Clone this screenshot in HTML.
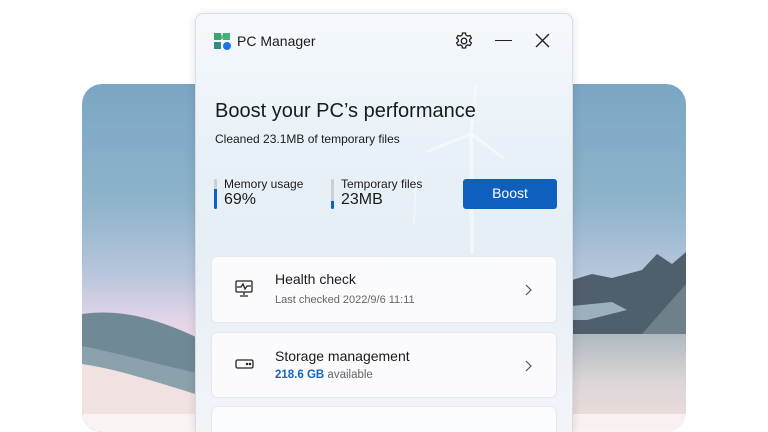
<!DOCTYPE html>
<html><head><meta charset="utf-8"><style>
*{margin:0;padding:0;box-sizing:border-box}
html,body{width:768px;height:432px;overflow:hidden}
body{background:#fff;position:relative;font-family:"Segoe UI","Liberation Sans",sans-serif;color:#1b1b1b}
.bg{position:absolute;left:82px;top:84px;width:604px;height:348px;border-radius:20px;overflow:hidden;background:linear-gradient(180deg,#7aa6c3 0%,#8fb4cc 35%,#b8c6dc 55%,#e4d4e8 68%,#f0dde8 78%,#f3e3e2 100%)}
.fade{position:absolute;left:0;right:0;bottom:0;height:18px;background:rgba(255,255,255,.6)}
.win{position:absolute;left:195px;top:13px;width:378px;height:419px;border:1px solid #d8dde3;border-bottom:none;border-radius:8px 8px 0 0;overflow:hidden;background:linear-gradient(180deg,#f6f9fc 0%,#e9f1f8 30%,#e6eef6 55%,#f2f4f8 100%);box-shadow:0 2px 10px rgba(0,0,0,.12)}
.t{position:absolute;white-space:nowrap}
.card{position:absolute;left:15px;width:346px;background:rgba(252,252,253,.92);border:1px solid #e6e9ee;border-radius:6px}
.bar{position:absolute;width:3px;height:30px;background:#ccd0d4;border-radius:2px;overflow:hidden}
.bar i{position:absolute;left:0;bottom:0;width:3px;background:#0f5fc4}
</style></head><body>
<div class="bg">
<svg width="604" height="348" style="position:absolute;left:0;top:0">
<defs><linearGradient id="s" x1="0" y1="0" x2="0" y2="1"><stop offset="0" stop-color="#aeb9c0"/><stop offset=".5" stop-color="#dcd6d8"/><stop offset="1" stop-color="#f1dedb"/></linearGradient></defs>
<path d="M0 230 C40 224 80 236 120 256 L120 348 L0 348Z" fill="#6f8a96"/>
<path d="M0 262 C40 270 90 284 120 290 L120 348 L0 348Z" fill="#8ba1ab"/>
<path d="M0 280 C40 286 80 300 120 312 L120 348 L0 348Z" fill="#f1e2e1"/>
<path d="M490 196 L510 190 L530 194 L560 186 L575 170 L590 180 L604 168 L604 250 L490 250Z" fill="#4f5f6b"/>
<path d="M490 222 L530 218 L545 226 L505 236 L490 236Z" fill="#9db1bd"/>
<path d="M560 250 L604 200 L604 250Z" fill="#6f808b"/>
<rect x="490" y="250" width="114" height="98" fill="url(#s)"/>
</svg>
<div class="fade"></div>
</div>
<div class="win">
<svg class="t" style="left:17px;top:18px" width="19" height="19" viewBox="0 0 19 19"><path d="M1 1 L8 1 L9 6 L8 8 L1 8 Z" fill="#3aa56c"/><path d="M10 1 L17 1 L17 8 L10 8 L9 5Z" fill="#46b07d"/><path d="M1 10 L8 10 L8 17 L1 17Z" fill="#2f8f86"/><circle cx="14" cy="14" r="4" fill="#1a73e8"/></svg>
<div class="t" style="left:41px;top:19px;font-size:14px">PC Manager</div>
<svg class="t" style="left:258px;top:17px" width="20" height="20" viewBox="0 0 20 20" fill="none" stroke="#222" stroke-width="1.3"><circle cx="10" cy="10" r="2.8"/><path d="M8.5 2 h3 l.5 2.2 1.8 1 2.1-.8 1.5 2.6-1.7 1.5 v2 l1.7 1.5-1.5 2.6-2.1-.8-1.8 1-.5 2.2h-3l-.5-2.2-1.8-1-2.1.8-1.5-2.6 1.7-1.5v-2l-1.7-1.5 1.5-2.6 2.1.8 1.8-1z"/></svg>
<div class="t" style="left:299px;top:26px;width:17px;height:1.4px;background:#222"></div>
<svg class="t" style="left:339px;top:19px" width="15" height="15" stroke="#222" stroke-width="1.4"><path d="M1 1L14 14M14 1L1 14"/></svg>
<svg class="t" style="left:190px;top:60px" width="150" height="180" stroke="#fff" stroke-opacity=".45" fill="none"><path d="M90 10 L85 60 M85 60 L40 78 M85 60 L118 84" stroke-width="3"/><path d="M85 60 L86 180" stroke-width="4"/><path d="M30 100 L28 150" stroke-width="2"/></svg>
<div class="t" style="left:19px;top:86px;font-size:20px">Boost your PC’s performance</div>
<div class="t" style="left:19px;top:118px;font-size:12px">Cleaned 23.1MB of temporary files</div>
<div class="bar" style="left:18px;top:165px"><i style="height:20px"></i></div>
<div class="t" style="left:28px;top:163px;font-size:12px">Memory usage</div>
<div class="t" style="left:28px;top:177px;font-size:16px">69%</div>
<div class="bar" style="left:135px;top:165px"><i style="height:8px"></i></div>
<div class="t" style="left:145px;top:163px;font-size:12px">Temporary files</div>
<div class="t" style="left:145px;top:177px;font-size:16px">23MB</div>
<div class="t" style="left:267px;top:165px;width:94px;height:30px;background:#0f5fbf;border-radius:3px;color:#fff;font-size:14px;text-align:center;line-height:28px">Boost</div>
<div class="card" style="top:242px;height:67px">
<svg class="t" style="left:22px;top:22px" width="20" height="20" fill="none" stroke="#222" stroke-width="1.3"><rect x="2" y="2" width="16" height="11" rx="1"/><path d="M3 8h4l2-3 2 5 2-3h4M10 13v3M6 17h8"/></svg>
<div class="t" style="left:63px;top:14px;font-size:14px">Health check</div>
<div class="t" style="left:63px;top:37px;font-size:11px;color:#666">Last checked 2022/9/6 11:11</div>
<svg class="t" style="left:312px;top:27px" width="8" height="12" fill="none" stroke="#555" stroke-width="1.2"><path d="M2 1l5 5-5 5"/></svg>
</div>
<div class="card" style="top:318px;height:66px">
<svg class="t" style="left:22px;top:24px" width="20" height="14" fill="none" stroke="#222" stroke-width="1.3"><rect x="2" y="3" width="17" height="8" rx="1.5"/><circle cx="13" cy="7" r=".6" fill="#222"/><circle cx="16" cy="7" r=".6" fill="#222"/></svg>
<div class="t" style="left:63px;top:15px;font-size:14px">Storage management</div>
<div class="t" style="left:63px;top:36px;font-size:11.5px;color:#666"><b style="color:#1565c0">218.6 GB</b> available</div>
<svg class="t" style="left:312px;top:27px" width="8" height="12" fill="none" stroke="#555" stroke-width="1.2"><path d="M2 1l5 5-5 5"/></svg>
</div>
<div class="card" style="top:392px;height:40px"></div>
</div>
</body></html>
